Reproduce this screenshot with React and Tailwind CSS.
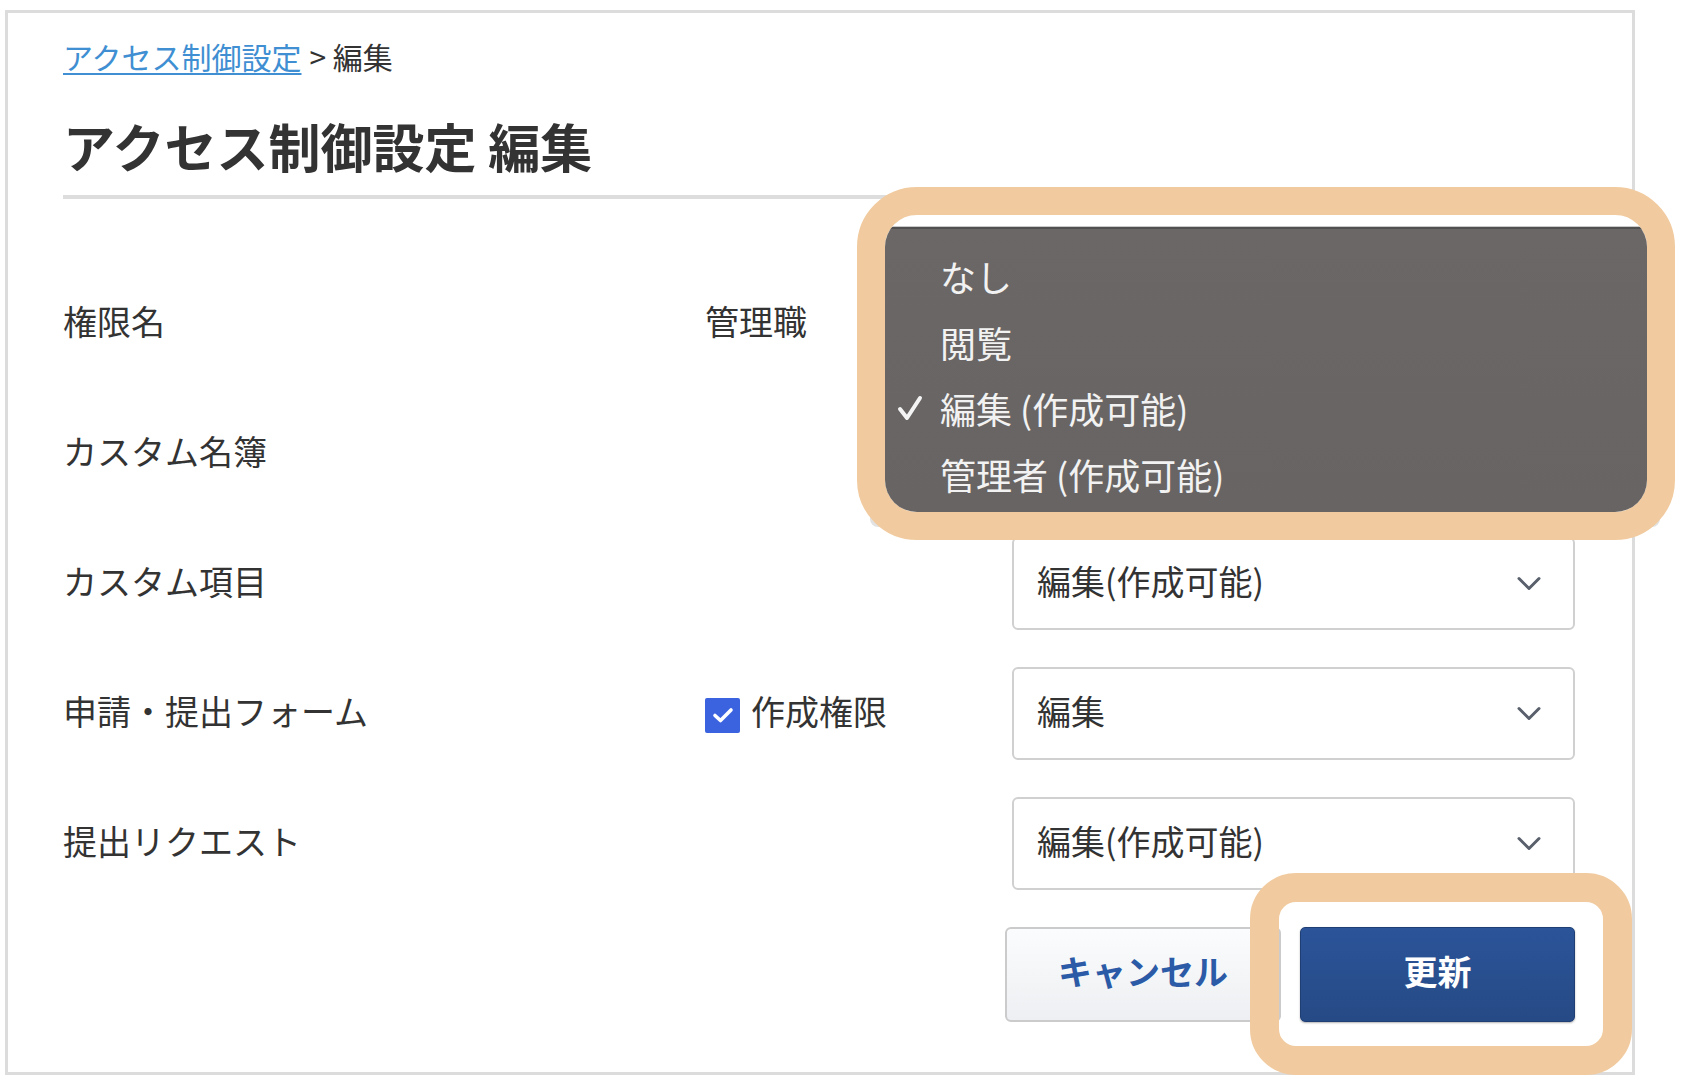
import React from 'react'

function Chevron() {
  return (
    <svg width="24" height="15" viewBox="0 0 24 15" fill="none">
      <polyline points="2,2.5 12,12.5 22,2.5" stroke="#59606c" strokeWidth="3" strokeLinecap="round" strokeLinejoin="round" />
    </svg>
  )
}

function Select({ value }) {
  return (
    <div className="w-[563px] h-[93px] border-2 border-[#d0d0d0] rounded-[6px] bg-white flex items-center justify-between pl-[23px] pr-[32px]">
      <span className="relative top-[-3px] text-[34px] leading-[40px] text-[#333]">{value}</span>
      <Chevron />
    </div>
  )
}

function Row({ label, middle, value }) {
  return (
    <div className="grid grid-cols-[642px_307px_563px] h-[93px] items-center">
      <div className="relative top-[-3px] text-[34px] leading-[40px] text-[#333]">{label}</div>
      <div className="text-[34px] leading-[40px] text-[#333]">{middle}</div>
      <div>{value && <Select value={value} />}</div>
    </div>
  )
}

export default function App() {
  const menuItems = [
    { label: 'なし', checked: false },
    { label: '閲覧', checked: false },
    { label: '編集 (作成可能)', checked: true },
    { label: '管理者 (作成可能)', checked: false },
  ]

  return (
    <div className="relative min-h-screen bg-white pl-[5px] pt-[10px] font-['Noto_Sans_CJK_JP','Noto_Sans',sans-serif]">
      <div className="w-[1630px] h-[1065px] border-[3px] border-[#dcdcdc] pl-[55px] pt-[23px]">
        {/* breadcrumb */}
        <div className="text-[30px] leading-[40px] text-[#333]">
          <a href="#" className="text-[#3f8fd2] underline underline-offset-[4px] decoration-2">アクセス制御設定</a>
          <span className="ml-[8px]">&gt; 編集</span>
        </div>

        <h1 className="mt-[40px] w-[1512px] text-[52px] leading-[60px] font-bold text-[#333] pb-[19px] border-b-4 border-[#dddddd]">
          アクセス制御設定 編集
        </h1>

        <div className="mt-[78px] w-[1512px] flex flex-col gap-[37px]">
          <Row label="権限名" middle={<span className="relative top-[-3px]">管理職</span>} />
          <Row label="カスタム名簿" />
          <Row label="カスタム項目" value="編集(作成可能)" />
          <Row
            label="申請・提出フォーム"
            middle={
              <label className="flex items-center gap-[11px]">
                <span className="w-[35px] h-[35px] rounded-[2px] bg-[#3b63e0] flex items-center justify-center mt-[3px]">
                  <svg width="22" height="18" viewBox="0 0 22 18" fill="none">
                    <polyline points="3,9.5 8.5,14.5 19,4" stroke="white" strokeWidth="3.6" strokeLinecap="round" strokeLinejoin="round" />
                  </svg>
                </span>
                <span className="relative top-[-3px]">作成権限</span>
              </label>
            }
            value="編集"
          />
          <Row label="提出リクエスト" value="編集(作成可能)" />
        </div>

        <div className="mt-[37px] w-[1512px] flex justify-end gap-[19px]">
          <button className="w-[276px] h-[95px] pb-[8px] rounded-[6px] border-2 border-[#cbcbcb] bg-gradient-to-b from-[#fbfcfd] to-[#edeff2] text-[34px] font-bold text-[#2b5aa6]">
            キャンセル
          </button>
          <button className="w-[275px] h-[95px] pb-[8px] rounded-[5px] border border-[#1f3f74] bg-gradient-to-b from-[#2b5499] to-[#264a85] text-[34px] font-bold text-white shadow-[0_1px_2px_rgba(0,0,0,0.3)]">
            更新
          </button>
        </div>
      </div>

      {/* native popup shadow */}
      <div className="absolute left-[870px] top-[222px] w-[790px] h-[305px] bg-[#e2e2e2] rounded-b-[8px]" />

      {/* highlight ring around the open dropdown */}
      <div className="absolute left-[857px] top-[187px] w-[818px] h-[353px] border-[28px] border-[#f1cb9f] rounded-[60px] bg-white overflow-hidden">
        <div className="mt-[11px] h-px bg-[#c9c9c9]" />
        <div className="h-[286px] bg-gradient-to-b from-[#6a6766] to-[#676463] border-t-2 border-[#505050] pt-[14px]">
          {menuItems.map((item) => (
            <div key={item.label} className="flex items-center h-[66px]">
              <div className="w-[55px] flex justify-start pl-[12px]">
                {item.checked && (
                  <svg width="26" height="26" viewBox="0 0 26 26" fill="none">
                    <polyline points="3,14 10,23 23,3" stroke="#f4f4f4" strokeWidth="4" strokeLinecap="round" strokeLinejoin="round" />
                  </svg>
                )}
              </div>
              <span className="text-[36px] leading-[44px] text-[#f2f2f2]">{item.label}</span>
            </div>
          ))}
        </div>
      </div>

      {/* highlight ring around the update button */}
      <div className="absolute left-[1250px] top-[873px] w-[382px] h-[202px] border-[29px] border-[#f1cb9f] rounded-[46px] pointer-events-none" />
    </div>
  )
}
